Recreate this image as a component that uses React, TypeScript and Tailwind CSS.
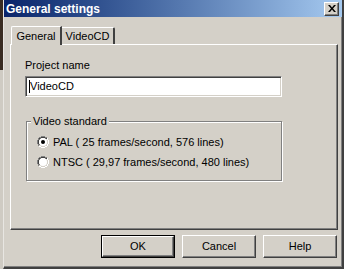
import React from "react";

const raised =
  "border border-t-white border-l-white border-r-[#404040] border-b-[#404040] shadow-[inset_-1px_-1px_0_#808080,inset_1px_1px_0_#d4d0c8]";

function Radio({ checked }: { checked: boolean }) {
  return (
    <svg width="12" height="12" viewBox="0 0 12 12" className="shrink-0">
      <path d="M4 0.5h4M2 1.5h2M8 1.5h2M1.5 2v2M0.5 4v4M1.5 8v2" stroke="#808080" strokeWidth="1" fill="none" />
      <path d="M4 1.5h4M2 2.5h2M8 2.5h2M2.5 3v1M1.5 4v4M2.5 8v1" stroke="#404040" strokeWidth="1" fill="none" />
      <path d="M10.5 2v2M11.5 4v4M10.5 8v2M2 10.5h2M8 10.5h2M4 11.5h4" stroke="#ffffff" strokeWidth="1" fill="none" />
      <path d="M9.5 3v1M10.5 4v4M9.5 8v1M3 9.5h1M8 9.5h1M4 10.5h4" stroke="#d4d0c8" strokeWidth="1" fill="none" />
      <circle cx="6" cy="6" r="4" fill="#ffffff" />
      {checked && <circle cx="6" cy="6" r="2" fill="#000000" />}
    </svg>
  );
}

export default function App() {
  return (
    <div
      className="flex w-[344px] h-[269px] overflow-hidden bg-[#d4d0c8] text-[11px] text-black"
      style={{ fontFamily: '"Liberation Sans", Arial, sans-serif' }}
    >
      <div className="flex flex-col w-[3px] shrink-0">
        <div className="h-[70px] bg-[#3a2c22]" />
        <div className="flex-1 bg-[#cfcbc3]" />
      </div>
      <div className="flex flex-col flex-1 border-l border-l-[#e8e6e2] border-r-2 border-r-[#404040] border-b-2 border-b-[#404040] shadow-[inset_-1px_-1px_0_#808080]">
        <div className="flex items-center h-[17px] shrink-0 bg-gradient-to-r from-[#0a246a] to-[#a6caf0] pl-[2px] pr-[3px]">
          <span className="text-white font-bold text-[12px] leading-none">General settings</span>
          <div className="flex-1" />
          <div className={`w-[15px] h-[14px] bg-[#d4d0c8] flex items-center justify-center ${raised}`}>
            <svg width="8" height="7" viewBox="0 0 8 7">
              <path d="M0 0h2l2 2.5 2-2.5h2l-3 3.5 3 3.5h-2l-2-2.5-2 2.5h-2l3-3.5z" fill="#000" />
            </svg>
          </div>
        </div>
        <div className="flex flex-col pl-[6px] pr-[4px] pt-[9px]">
          <div className="flex items-end h-[18px] pl-[1px]">
            <div className="relative z-10 h-[19px] w-[51px] bg-[#d4d0c8] border-t border-l border-t-white border-l-white border-r-2 border-r-[#404040] rounded-tl-[2px] flex items-center justify-center -mb-[1px]">
              General
            </div>
            <div className="h-[17px] w-[53px] bg-[#d4d0c8] border-t border-t-white border-r-2 border-r-[#404040] rounded-tr-[2px] flex items-center justify-center pt-[1px]">
              VideoCD
            </div>
          </div>
          <div className="h-[186px] border border-t-white border-l-white border-r-[#404040] border-b-[#404040] shadow-[inset_-1px_-1px_0_#808080] pl-[14px] pt-[14px]">
            <div className="leading-[13px]">Project name</div>
            <div className="mt-[4px] w-[257px] h-[21px] bg-white border border-t-[#808080] border-l-[#808080] border-r-white border-b-white shadow-[inset_1px_1px_0_#404040,inset_-1px_-1px_0_#d4d0c8] flex items-center pl-[3px]">
              <span className="w-px h-[13px] bg-black" />
              <span>VideoCD</span>
            </div>
            <div className="relative mt-[24px] ml-[1px] w-[256px] h-[60px] border border-[#808080] shadow-[inset_1px_1px_0_#ffffff,1px_1px_0_#ffffff]">
              <span className="absolute -top-[8px] left-[4px] bg-[#d4d0c8] px-[2px] leading-[14px]">
                Video standard
              </span>
              <div className="flex flex-col gap-[8px] pl-[10px] pt-[14px]">
                <div className="flex items-center gap-[4px] h-[12px]">
                  <Radio checked />
                  <span>PAL ( 25 frames/second, 576 lines)</span>
                </div>
                <div className="flex items-center gap-[4px] h-[12px]">
                  <Radio checked={false} />
                  <span>NTSC ( 29,97 frames/second, 480 lines)</span>
                </div>
              </div>
            </div>
          </div>
          <div className="flex justify-end gap-[7px] mt-[5px] pr-[1px]">
            <div className="w-[74px] h-[23px] border border-black flex">
              <div className={`flex-1 flex items-center justify-center bg-[#d4d0c8] ${raised}`}>OK</div>
            </div>
            <div className={`w-[74px] h-[23px] flex items-center justify-center bg-[#d4d0c8] ${raised}`}>Cancel</div>
            <div className={`w-[74px] h-[23px] flex items-center justify-center bg-[#d4d0c8] ${raised}`}>Help</div>
          </div>
        </div>
      </div>
    </div>
  );
}
